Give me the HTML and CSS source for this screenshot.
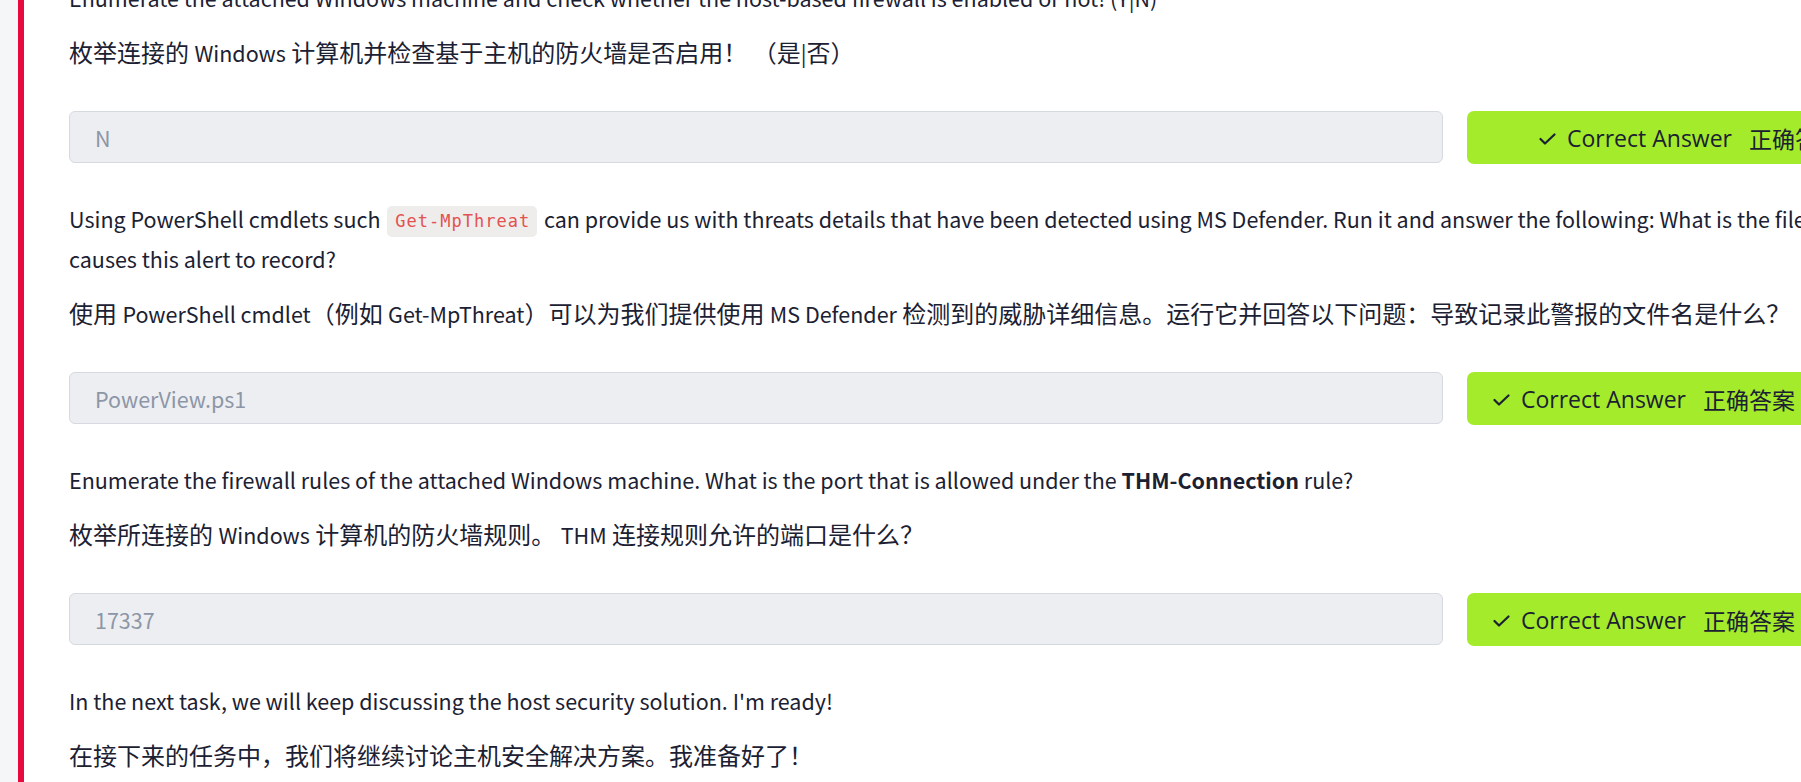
FILE: index.html
```html
<!DOCTYPE html>
<html lang="en">
<head>
<meta charset="utf-8">
<title>Task questions</title>
<link rel="stylesheet" href="styles.css">
</head>
<body>
<div class="layout">
  <aside class="rail"></aside>
  <main class="content">
    <section class="question">
      <p class="q-en">Enumerate the attached Windows machine and check whether the host-based firewall is enabled or not! (Y|N)</p>
      <p class="q-zh">枚举连接的 <span class="lat">Windows</span> 计算机并检查基于主机的防火墙是否启用！ （是<span class="lat">|</span>否）</p>
      <div class="answer-row">
        <div class="answer-input">N</div>
        <div class="answer-btn answer-btn--wide">
          <svg class="check" width="17" height="12" viewBox="0 0 17 12"><path d="M1.5 6 L6 10.5 L15.5 1.5" fill="none" stroke="#1b2132" stroke-width="2.2" stroke-linecap="round" stroke-linejoin="round"/></svg>
          <span class="btn-en">Correct Answer</span>
          <span class="btn-zh">正确答案</span>
        </div>
      </div>
    </section>

    <section class="question">
      <p class="q-en">Using PowerShell cmdlets such <code class="chip">Get-MpThreat</code> can provide us with threats details that have been detected using MS Defender. Run it and answer the following: What is the file name that causes this alert to record?</p>
      <p class="q-zh">使用 <span class="lat">PowerShell cmdlet</span>（例如 <span class="lat">Get-MpThreat</span>）可以为我们提供使用 <span class="lat">MS Defender</span> 检测到的威胁详细信息。运行它并回答以下问题：导致记录此警报的文件名是什么？</p>
      <div class="answer-row">
        <div class="answer-input">PowerView.ps1</div>
        <div class="answer-btn">
          <svg class="check" width="17" height="12" viewBox="0 0 17 12"><path d="M1.5 6 L6 10.5 L15.5 1.5" fill="none" stroke="#1b2132" stroke-width="2.2" stroke-linecap="round" stroke-linejoin="round"/></svg>
          <span class="btn-en">Correct Answer</span>
          <span class="btn-zh">正确答案</span>
        </div>
      </div>
    </section>

    <section class="question">
      <p class="q-en">Enumerate the firewall rules of the attached Windows machine. What is the port that is allowed under the <strong>THM-Connection</strong> rule?</p>
      <p class="q-zh">枚举所连接的 <span class="lat">Windows</span> 计算机的防火墙规则。 <span class="lat">THM</span> 连接规则允许的端口是什么？</p>
      <div class="answer-row">
        <div class="answer-input">17337</div>
        <div class="answer-btn">
          <svg class="check" width="17" height="12" viewBox="0 0 17 12"><path d="M1.5 6 L6 10.5 L15.5 1.5" fill="none" stroke="#1b2132" stroke-width="2.2" stroke-linecap="round" stroke-linejoin="round"/></svg>
          <span class="btn-en">Correct Answer</span>
          <span class="btn-zh">正确答案</span>
        </div>
      </div>
    </section>

    <section class="question">
      <p class="q-en">In the next task, we will keep discussing the host security solution. I'm ready!</p>
      <p class="q-zh">在接下来的任务中，我们将继续讨论主机安全解决方案。我准备好了！</p>
    </section>
  </main>
</div>
</body>
</html>
```

FILE: styles.css
```css
html, body {
  margin: 0;
  padding: 0;
  background: #ffffff;
  overflow: hidden;
}

body {
  font-family: "Noto Sans CJK SC", "Noto Sans", sans-serif;
  color: #1b2132;
}

.layout {
  display: flex;
  height: 100vh;
  overflow: hidden;
}

.rail {
  flex: 0 0 18px;
  background: #f5f6f8;
}

.content {
  flex: 1 1 auto;
  min-width: 0;
  border-left: 6px solid #e80a3f;
  padding-left: 45px;
  overflow: hidden;
}

.question {
  width: 1880px;
}

.question:first-child {
  margin-top: -22px;
}

.q-en {
  margin: -4px 0 17px;
  font-size: 21.5px;
  line-height: 40px;
}

.q-en strong {
  font-weight: 700;
}

.q-zh {
  margin: -1px 0 41px;
  font-size: 24px;
  line-height: 36px;
  height: 36px;
  white-space: nowrap;
}

.lat {
  font-size: 21.5px;
  line-height: 1;
}

.chip {
  display: inline-block;
  font-family: "DejaVu Sans Mono", monospace;
  font-size: 17px;
  letter-spacing: 1px;
  line-height: 31px;
  padding: 0 7px 0 8px;
  margin: 0 2px;
  background: #eeedeb;
  color: #e3524f;
  border-radius: 5px;
  vertical-align: 1px;
}

.answer-row {
  display: flex;
  align-items: flex-start;
  gap: 24px;
  margin-bottom: 39px;
}

.answer-input {
  flex: 0 0 1374px;
  box-sizing: border-box;
  height: 52px;
  display: flex;
  align-items: center;
  padding-left: 25px;
  background: #eceef2;
  border: 1px solid #d6d9df;
  border-radius: 6px;
  font-size: 21.5px;
  color: #8d96a6;
}

.answer-btn {
  flex: 1 1 auto;
  box-sizing: border-box;
  height: 53px;
  display: flex;
  align-items: center;
  padding-left: 26px;
  background: #a4eb2b;
  border-radius: 7px;
  white-space: nowrap;
  color: #1b2132;
}

.answer-btn--wide {
  padding-left: 72px;
}

.check {
  flex: none;
  margin-right: 11px;
  margin-top: 2px;
}

.btn-en {
  font-family: "Open Sans", "Noto Sans", sans-serif;
  font-size: 23px;
}

.btn-zh {
  margin-left: 17px;
  font-family: "Noto Sans CJK SC", sans-serif;
  font-size: 23px;
}
```
